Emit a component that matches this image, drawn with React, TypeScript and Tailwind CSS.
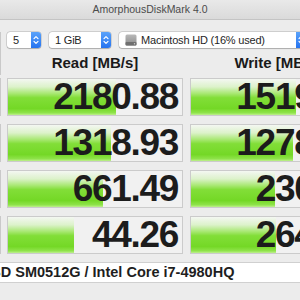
import React from "react";

const rows = [
  { read: "2180.88", readFill: 108, write: "1519.46", writeFill: 105 },
  { read: "1318.93", readFill: 103, write: "1278.62", writeFill: 102 },
  { read: "661.49", readFill: 95, write: "230.81", writeFill: 84 },
  { read: "44.26", readFill: 66, write: "264.37", writeFill: 85 },
];

function Stepper() {
  return (
    <div className="ml-auto flex h-full w-[10px] shrink-0 items-center justify-center rounded-r-[3px] bg-gradient-to-b from-[#5aa2fa] to-[#2473f0]">
      <svg width="10" height="16" viewBox="0 0 10 16" fill="none">
        <path d="M3 6.6 L5 4.6 L7 6.6" stroke="white" strokeWidth="1.2" strokeLinecap="round" strokeLinejoin="round" />
        <path d="M3 9.4 L5 11.4 L7 9.4" stroke="white" strokeWidth="1.2" strokeLinecap="round" strokeLinejoin="round" />
      </svg>
    </div>
  );
}

function Select({ className, children }: { className: string; children: React.ReactNode }) {
  return (
    <div
      className={`flex h-[16px] shrink-0 items-center rounded-[3px] bg-white shadow-[0_0_0_0.5px_rgba(0,0,0,0.22),0_0.5px_1px_rgba(0,0,0,0.18)] ${className}`}
    >
      {children}
      <Stepper />
    </div>
  );
}

function DriveIcon() {
  return (
    <svg width="12" height="12" viewBox="0 0 12 12" className="mr-[4px] shrink-0">
      <defs>
        <linearGradient id="hd" x1="0" y1="0" x2="0" y2="1">
          <stop offset="0" stopColor="#b9b9b9" />
          <stop offset="1" stopColor="#8a8a8a" />
        </linearGradient>
      </defs>
      <rect x="0.5" y="0.5" width="11" height="11" rx="1.5" fill="url(#hd)" />
      <rect x="0.5" y="8" width="11" height="3.5" rx="1" fill="#6f6f6f" />
      <circle cx="9.5" cy="9.8" r="0.7" fill="#cfcfcf" />
    </svg>
  );
}

function Meter({ value, fill }: { value: string; fill: number }) {
  return (
    <div className="relative h-[38px] w-[176px] shrink-0 border border-[#cbcbcb] bg-[#f1f1f1]">
      <div
        className="absolute inset-y-0 left-0 bg-[linear-gradient(to_bottom,#f4f7f2_0%,#dcf2ca_22%,#a9e874_40%,#82de38_52%,#74d826_82%,#8fe34a_94%,#bff08f_100%)]"
        style={{ width: fill }}
      />
      <span className="relative flex h-full items-center justify-end pr-[4px] pb-[1px] text-[37px] leading-none font-bold tracking-[-1.3px] text-[#1c1c1c]">
        {value}
      </span>
    </div>
  );
}

export default function App() {
  return (
    <div className="h-[300px] w-[300px] overflow-hidden bg-[#ececec] font-['Liberation_Sans',Arial,sans-serif]">
      <div className="flex h-[20px] items-center justify-center border-b border-[#c4c4c4] bg-gradient-to-b from-[#e9e9e9] to-[#dadada] text-[10.5px] text-[#4b4b4b]">
        AmorphousDiskMark 4.0
      </div>

      <div className="flex">
        <div className="flex w-[1px] shrink-0 flex-col gap-[8px]">
          <div className="mt-[12px] mb-[-5px] h-[43px] bg-[#c9c9c9]" />
          {rows.map((_, i) => (
            <div key={i} className="h-[38px] bg-[#c9c9c9]" />
          ))}
        </div>

        <div className="ml-[6px] flex flex-col">
          <div className="flex gap-[8px] pt-[12px] text-[11px] tracking-[-0.2px] text-[#1f1f1f]">
            <Select className="w-[34px]">
              <span className="pl-[6px]">5</span>
            </Select>
            <Select className="w-[62px]">
              <span className="pl-[6px]">1 GiB</span>
            </Select>
            <Select className="w-[187px]">
              <span className="flex items-center pl-[6px] whitespace-nowrap">
                <DriveIcon />
                Macintosh HD (16% used)
              </span>
            </Select>
          </div>

          <div className="mt-[6px] flex h-[18px] gap-[7px] text-[15px] leading-[18px] font-bold text-[#1a1a1a]">
            <div className="w-[176px] shrink-0 text-center">Read [MB/s]</div>
            <div className="w-[176px] shrink-0 text-center whitespace-nowrap">Write [MB/s]</div>
          </div>

          <div className="mt-[6px] flex flex-col gap-[8px]">
            {rows.map((r) => (
              <div key={r.read} className="flex gap-[7px]">
                <Meter value={r.read} fill={r.readFill} />
                <Meter value={r.write} fill={r.writeFill} />
              </div>
            ))}
          </div>
        </div>
      </div>

      <div className="mt-[8px] flex h-[21px] items-center overflow-hidden border-y border-[#d0d0d0] bg-white text-[14.5px] font-bold whitespace-nowrap text-[#1e1e1e]">
        <span className="-ml-[71px]">APPLE SSD SM0512G / Intel Core i7-4980HQ</span>
      </div>
    </div>
  );
}
